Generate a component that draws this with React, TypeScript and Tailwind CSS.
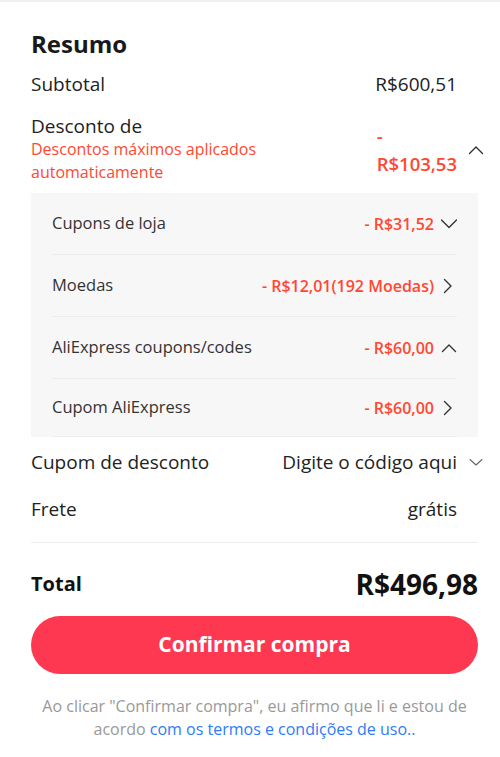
const font = { fontFamily: '"Open Sans", "Noto Sans", sans-serif' };

function Chevron({ dir, className = "" }: { dir: "up" | "down" | "right" | "small"; className?: string }) {
  const pts =
    dir === "up"
      ? "1.5,11.5 8,5 14.5,11.5"
      : dir === "down"
      ? "0.5,4 8,11.5 15.5,4"
      : dir === "right"
      ? "3.5,1.5 10,8 3.5,14.5"
      : "2,5.5 8,11 14,5.5";
  return (
    <svg viewBox="0 0 16 16" className={`h-4 w-4 shrink-0 ${className}`} fill="none">
      <polyline points={pts} stroke="currentColor" strokeWidth={dir === "small" ? 1.1 : 1.4} strokeLinecap="round" strokeLinejoin="round" />
    </svg>
  );
}

function SubRow({
  label,
  value,
  icon,
  light,
  h,
}: {
  label: string;
  value: string;
  icon: "down" | "up" | "right";
  light?: boolean;
  h: string;
}) {
  return (
    <div className={`flex items-center justify-between border-b border-[#ececec] ${h}`}>
      <span className={`text-[16.5px] text-[#333] ${light ? "font-normal" : "font-medium"}`}>{label}</span>
      <span className="flex items-center gap-[7px]">
        <span className="text-[16px] font-semibold text-[#ff4832]">{value}</span>
        <Chevron dir={icon} className="text-[#333]" />
      </span>
    </div>
  );
}

export default function App() {
  return (
    <main className="min-h-[757px] w-[500px] border-t-2 border-[#f0f0f0] bg-white" style={font}>
      <div className="pl-[31px] pr-[22px] pt-[27px]">
        <h2 className="text-[24px] font-bold leading-[30px] text-[#191919]">Resumo</h2>

        <div className="mt-[12px] flex items-center justify-between text-[19px] leading-[26px] text-[#222]">
          <span>Subtotal</span>
          <span className="mr-[21px]">R$600,51</span>
        </div>

        <div className="mt-[17px] flex justify-between">
          <div>
            <div className="text-[19px] leading-[24px] text-[#222]">Desconto de</div>
            <div className="w-[290px] text-[16px] leading-[23px] text-[#ff4832]">
              Descontos máximos aplicados automaticamente
            </div>
          </div>
          <div className="flex items-start">
            <div className="mt-[8px] text-[18.5px] font-semibold leading-[28px] text-[#ff4832]">
              -
              <br />
              R$103,53
            </div>
            <Chevron dir="up" className="-mr-[6px] ml-[11px] mt-[28px] text-[#333]" />
          </div>
        </div>

        <div className="mt-[9px] bg-[#f7f7f7] px-[21px]">
          <SubRow h="h-[62px]" label="Cupons de loja" value="- R$31,52" icon="down" />
          <SubRow h="h-[62px]" label="Moedas" value="- R$12,01(192 Moedas)" icon="right" />
          <SubRow h="h-[62px]" label="AliExpress coupons/codes" value="- R$60,00" icon="up" />
          <SubRow h="h-[58px]" label="Cupom AliExpress" value="- R$60,00" icon="right" light />
        </div>

        <div className="mt-[12px] flex items-center justify-between text-[19px] leading-[26px] text-[#222]">
          <span>Cupom de desconto</span>
          <span className="-mr-[6px] flex items-center gap-[11px]">
            Digite o código aqui
            <Chevron dir="small" className="text-[#666]" />
          </span>
        </div>

        <div className="mt-[21px] flex items-center justify-between text-[19px] leading-[26px] text-[#222]">
          <span>Frete</span>
          <span className="mr-[21px]">grátis</span>
        </div>

        <div className="mt-[20px] border-t border-[#ececec]" />

        <div className="mt-[24px] flex h-[34px] items-center justify-between text-[#111]">
          <span className="text-[20px] font-bold">Total</span>
          <span className="text-[28px] font-bold">R$496,98</span>
        </div>

        <button className="mt-[15px] flex h-[58px] w-full items-center justify-center rounded-full bg-[#fe3850] text-[21px] font-bold text-white">
          Confirmar compra
        </button>

        <p className="mt-[21px] text-center text-[16px] leading-[23px] text-[#999]">
          Ao clicar "Confirmar compra", eu afirmo que li e estou de
          <br />
          acordo <span className="text-[#2e7cf6]">com os termos e condições de uso..</span>
        </p>
      </div>
    </main>
  );
}
